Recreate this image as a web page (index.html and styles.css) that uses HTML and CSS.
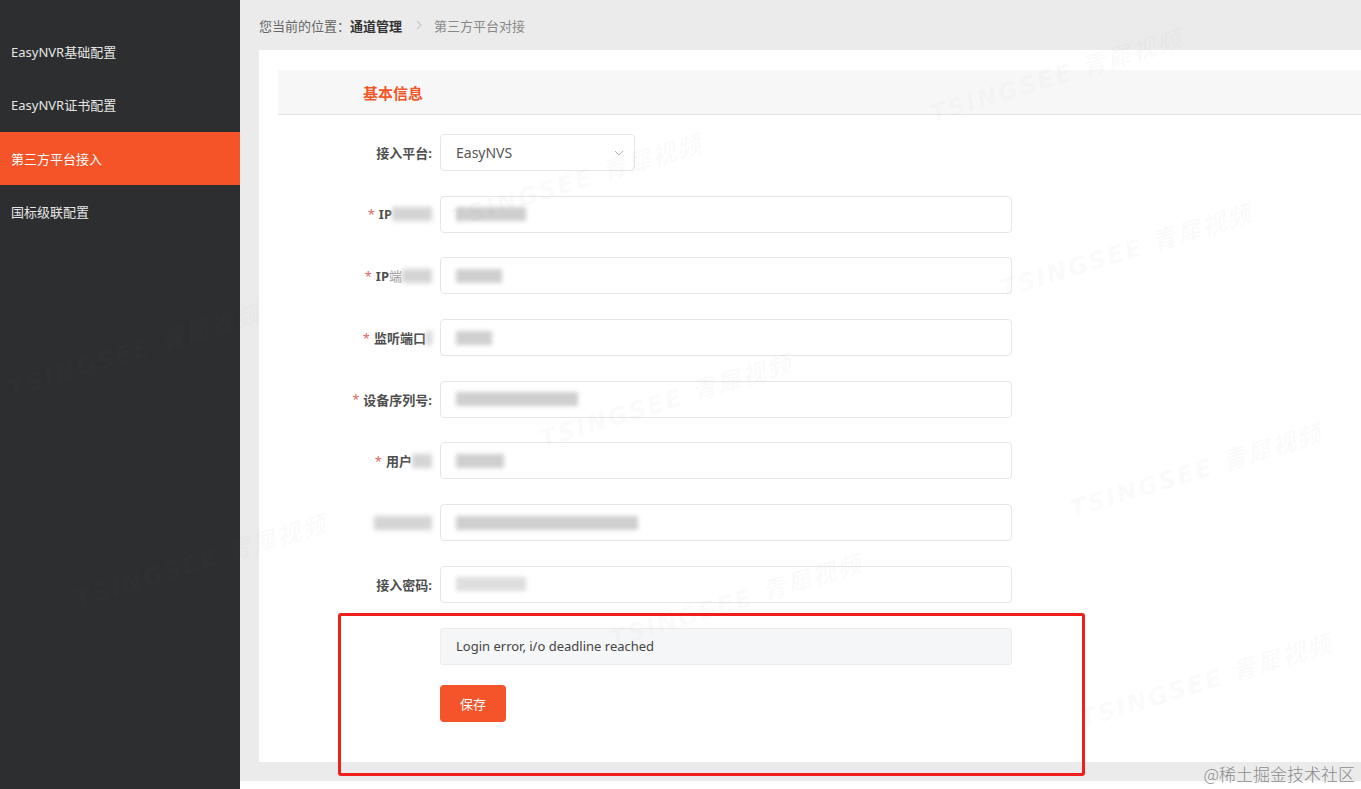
FILE: index.html
```html
<!doctype html>
<html lang="zh">

<head>
  <meta charset="utf-8">
  <title>第三方平台接入</title>
  <meta name="viewport" content="width=device-width, initial-scale=1">
  <link rel="stylesheet" href="styles.css">
</head>

<body>
  <div class="layout">
    <nav class="sidebar">
      <a class="nav-item">EasyNVR基础配置</a>
      <a class="nav-item">EasyNVR证书配置</a>
      <a class="nav-item active">第三方平台接入</a>
      <a class="nav-item">国标级联配置</a>
    </nav>

    <main class="main">
      <div class="breadcrumb">
        <span class="crumb-lead">您当前的位置：</span>
        <span class="crumb-strong">通道管理</span>
        <span class="crumb-sep">
          <svg width="6" height="10" viewBox="0 0 6 10"><path d="M1 1l4 4-4 4" fill="none" stroke="#c8c8c8" stroke-width="1.2"/></svg>
        </span>
        <span class="crumb-current">第三方平台对接</span>
      </div>

      <section class="card">
        <div class="card-head">基本信息</div>

        <form class="form">
          <div class="form-row">
            <label class="form-label">接入平台:</label>
            <div class="select">
              <span>EasyNVS</span>
              <svg class="chevron" width="10" height="6" viewBox="0 0 10 6"><path d="M1 1l4 4 4-4" fill="none" stroke="#b4b4b4" stroke-width="1"/></svg>
            </div>
          </div>

          <div class="form-row">
            <label class="form-label"><i class="req">*</i> IP<span class="blur-label w40"></span></label>
            <div class="input"><span class="blur-val" style="width:70px"></span></div>
          </div>

          <div class="form-row">
            <label class="form-label"><i class="req">*</i> IP <span class="faint">端</span><span class="blur-label w30"></span></label>
            <div class="input"><span class="blur-val" style="width:46px"></span></div>
          </div>

          <div class="form-row">
            <label class="form-label"><i class="req">*</i> 监听端口<span class="blur-label w6"></span></label>
            <div class="input"><span class="blur-val" style="width:36px"></span></div>
          </div>

          <div class="form-row">
            <label class="form-label"><i class="req">*</i> 设备序列号:</label>
            <div class="input"><span class="blur-val" style="width:122px"></span></div>
          </div>

          <div class="form-row">
            <label class="form-label"><i class="req">*</i> 用户<span class="blur-label w20"></span></label>
            <div class="input"><span class="blur-val" style="width:48px"></span></div>
          </div>

          <div class="form-row">
            <label class="form-label"><span class="blur-label w58"></span></label>
            <div class="input"><span class="blur-val" style="width:182px"></span></div>
          </div>

          <div class="form-row">
            <label class="form-label">接入密码:</label>
            <div class="input"><span class="blur-val light" style="width:70px"></span></div>
          </div>

          <div class="form-row">
            <span class="form-label"></span>
            <div class="alert">Login error, i/o deadline reached</div>
          </div>

          <div class="form-row row-actions">
            <span class="form-label"></span>
            <button type="button" class="btn-save">保存</button>
          </div>
        </form>
      </section>
    </main>
  </div>

  <div class="watermarks">
    <span class="wm" style="left:930px;top:95px">TSINGSEE 青犀视频</span>
    <span class="wm" style="left:450px;top:200px">TSINGSEE 青犀视频</span>
    <span class="wm" style="left:1000px;top:270px">TSINGSEE 青犀视频</span>
    <span class="wm" style="left:8px;top:370px">TSINGSEE 青犀视频</span>
    <span class="wm" style="left:540px;top:420px">TSINGSEE 青犀视频</span>
    <span class="wm" style="left:1070px;top:490px">TSINGSEE 青犀视频</span>
    <span class="wm" style="left:75px;top:580px">TSINGSEE 青犀视频</span>
    <span class="wm" style="left:610px;top:620px">TSINGSEE 青犀视频</span>
    <span class="wm" style="left:1080px;top:700px">TSINGSEE 青犀视频</span>
  </div>

  <div class="annotation"></div>
  <div class="juejin">@稀土掘金技术社区</div>
</body>
</html>
```

FILE: styles.css
```css
html, body {
  margin: 0;
  padding: 0;
  background: #fff;
  font-family: "Noto Sans", "Noto Sans CJK SC", sans-serif;
  overflow: hidden;
}

.layout {
  display: flex;
  height: 789px;
}

/* sidebar */
.sidebar {
  width: 240px;
  flex: none;
  background: #2c2e2f;
  padding-top: 25px;
  box-sizing: border-box;
}
.nav-item {
  display: flex;
  align-items: center;
  height: 53.3px;
  padding-left: 11px;
  font-size: 13px;
  color: #e6e6e6;
}
.nav-item.active {
  background: #f45428;
  color: #fff;
}

/* main area */
.main {
  flex: 1;
  display: flex;
  flex-direction: column;
  background: #ebebeb;
  height: 781px;
  padding: 0 0 19px 19px;
  box-sizing: border-box;
  min-width: 0;
}
.breadcrumb {
  height: 50px;
  display: flex;
  align-items: center;
  font-size: 13px;
  color: #666;
}
.crumb-strong {
  color: #333;
  font-weight: bold;
}
.crumb-sep {
  margin: 0 12px 0 14px;
  display: inline-flex;
}
.crumb-current {
  color: #888;
}

.card {
  flex: 1;
  background: #fff;
  padding: 20px 0 0 19px;
}
.card-head {
  height: 44px;
  background: #f7f7f7;
  border-bottom: 1px solid #e3e3e3;
  display: flex;
  align-items: center;
  padding-left: 85px;
  color: #f0582a;
  font-size: 15px;
  font-weight: bold;
}

/* form */
.form {
  padding-top: 19px;
  display: flex;
  flex-direction: column;
  gap: 24.7px;
}
.form-row {
  display: flex;
  align-items: center;
  height: 37px;
}
.row-actions {
  margin-top: -4px;
}
.form-label {
  width: 162px;
  flex: none;
  box-sizing: border-box;
  padding-right: 8px;
  display: flex;
  justify-content: flex-end;
  align-items: center;
  font-size: 13px;
  font-weight: bold;
  color: #4f4f4f;
}
.req {
  font-style: normal;
  font-weight: normal;
  color: #e06666;
  margin-right: 4px;
}
.faint {
  color: #9a9a9a;
  font-weight: normal;
}
.blur-label {
  display: inline-block;
  height: 14px;
  background: #d4d4d4;
  filter: blur(2.5px);
}
.w6 { width: 6px; }
.w20 { width: 20px; }
.w30 { width: 30px; }
.w40 { width: 40px; }
.w58 { width: 58px; }

.input, .select {
  box-sizing: border-box;
  height: 37px;
  border: 1px solid #e6e6e6;
  border-radius: 4px;
  background: #fff;
  display: flex;
  align-items: center;
  padding-left: 15px;
  font-size: 14px;
  color: #555;
}
.input {
  width: 572px;
}
.select {
  width: 195px;
  justify-content: space-between;
  padding-right: 10px;
}
.blur-val {
  display: inline-block;
  height: 14px;
  background: #cfcfcf;
  filter: blur(2px);
}
.blur-val.light {
  background: #dedede;
}

.alert {
  box-sizing: border-box;
  width: 572px;
  height: 37px;
  background: #f5f6f7;
  border: 1px solid #ececec;
  border-radius: 3px;
  display: flex;
  align-items: center;
  padding-left: 15px;
  font-size: 13px;
  color: #444;
}

.btn-save {
  width: 66px;
  height: 37px;
  border: none;
  border-radius: 4px;
  background: #f5532a;
  color: #fff;
  font-family: inherit;
  font-size: 13px;
}

/* overlays */
.watermarks {
  position: absolute;
  inset: 0;
  pointer-events: none;
  overflow: hidden;
}
.wm {
  position: absolute;
  white-space: nowrap;
  font-family: "DejaVu Sans", "Noto Sans CJK SC", sans-serif;
  font-size: 24px;
  font-weight: bold;
  font-style: italic;
  letter-spacing: 2px;
  color: rgba(120, 120, 120, 0.045);
  transform: rotate(-17deg);
  transform-origin: left center;
}

.annotation {
  position: absolute;
  left: 338px;
  top: 613px;
  width: 741px;
  height: 157px;
  border: 3px solid #f01f1b;
  border-radius: 3px;
  pointer-events: none;
}

.juejin {
  position: absolute;
  right: 6px;
  top: 761px;
  font-size: 17px;
  color: #8c8c8c;
  font-family: "Noto Sans CJK SC", sans-serif;
  font-weight: 300;
}
```
